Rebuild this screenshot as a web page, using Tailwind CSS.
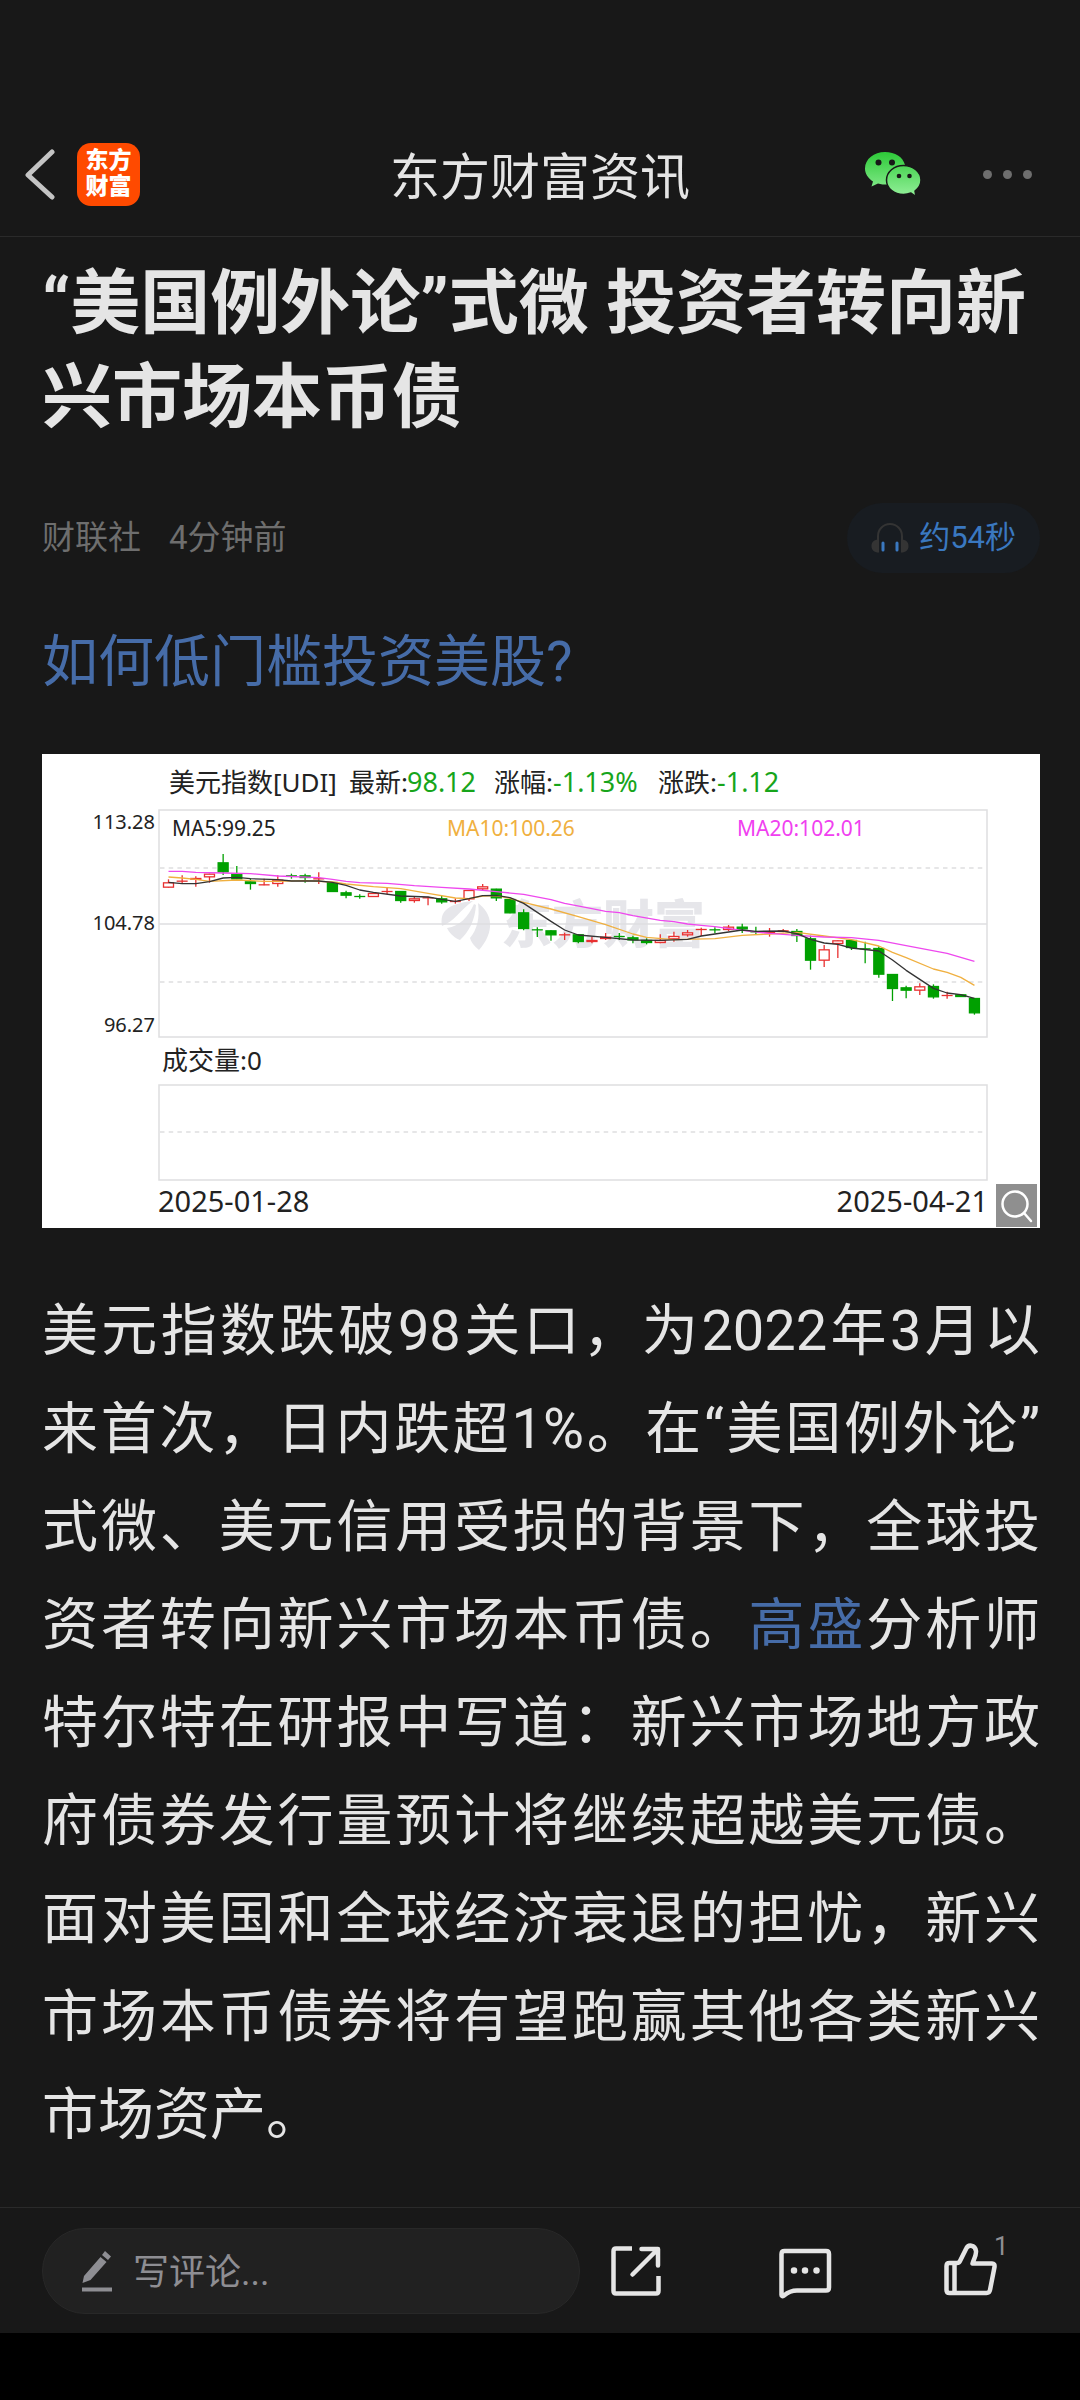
<!DOCTYPE html>
<html lang="zh-CN">
<head>
  <meta charset="UTF-8" />
  <meta name="viewport" content="width=device-width, initial-scale=1" />
  <title>东方财富资讯</title>
  <script src="https://cdn.jsdelivr.net/npm/@tailwindcss/browser@4"></script>
</head>
<body class="bg-black font-['Roboto','Noto_Sans_CJK_SC',sans-serif] text-[#e5e5e5]">
  <div class="flex min-h-screen flex-col bg-[#181818]">
    <!-- Header -->
    <header class="grid grid-cols-[1fr_auto_1fr] items-center border-b border-[#2a2a2a] pt-28">
      <div class="flex h-31 items-center gap-[21px] pl-6">
        <button type="button" aria-label="返回">
          <svg class="h-[52px] w-[32px]" viewBox="0 0 32 52" fill="none" stroke="#c4c4c4" stroke-width="5" stroke-linecap="round" stroke-linejoin="round">
            <path d="M28 4L4 27L28 49" />
          </svg>
        </button>
        <a href="#" class="flex size-[63px] flex-col items-center justify-center rounded-[14px] bg-[#ff4a00] text-[23px] leading-[26px] font-black text-white">
          <span>东方</span>
          <span>财富</span>
        </a>
      </div>
      <h2 class="pt-2 text-[50px] leading-[60px]">东方财富资讯</h2>
      <div class="flex items-center justify-end gap-[62px] pr-12">
        <button type="button" aria-label="微信分享">
          <svg class="h-[46px] w-[56px]" viewBox="0 0 56 46">
            <defs>
              <linearGradient id="wx" x1="0" y1="0" x2="0" y2="46" gradientUnits="userSpaceOnUse">
                <stop offset="0" stop-color="#2bc936" />
                <stop offset="1" stop-color="#95f09b" />
              </linearGradient>
            </defs>
            <path fill="url(#wx)" d="M20 1C9 1 0 8 0 17.500C0 23 3 27 8 30.500L6.500 35.500L13 32.500C16 33.500 19 33.500 22 33.500L40 14C38 6 30 1 20 1Z" />
            <path fill="url(#wx)" stroke="#181818" stroke-width="1.500" d="M38.500 14.500C29 14.500 21.500 21 21.500 29C21.500 37.500 29 43.500 38.500 43.500C41 43.500 43.500 43 46 42L51 45.500L50 40C54 37 56 33.500 56 29C56 21 48 14.500 38.500 14.500Z" />
            <g fill="#181818">
              <circle cx="13.500" cy="11.500" r="3" />
              <circle cx="27" cy="11.500" r="3" />
              <circle cx="34" cy="25" r="2.300" />
              <circle cx="44.500" cy="25" r="2.300" />
            </g>
          </svg>
        </button>
        <button type="button" aria-label="更多" class="flex gap-[11px]">
          <span class="size-[9px] rounded-full bg-[#6e6e6e]"></span>
          <span class="size-[9px] rounded-full bg-[#6e6e6e]"></span>
          <span class="size-[9px] rounded-full bg-[#6e6e6e]"></span>
        </button>
      </div>
    </header>

    <!-- Article -->
    <main class="flex-1 pt-5 pr-10 pb-10 pl-[42px]">
      <h1 class="text-[70px] leading-[94px] font-bold">“美国例外论”式微 投资者转向新兴市场本币债</h1>

      <div class="mt-[58px] flex items-center justify-between">
        <p class="flex gap-7 text-[33px] leading-[40px] text-[#6e6e6e]"><span>财联社</span><span>4分钟前</span></p>
        <button type="button" class="flex h-[70px] items-center gap-[10px] rounded-full bg-[#181c21] px-6 text-[31px] text-[#3a78c0]">
          <svg class="h-[30px] w-[38px]" viewBox="0 0 38 30">
            <path d="M7 18V13A12 12 0 0 1 31 13V18" fill="none" stroke="#343434" stroke-width="2" />
            <path d="M8 16.500C3 16.500 0.500 19 0.500 23S3 29.500 8 29.500ZM30 16.500C35 16.500 37.500 19 37.500 23S35 29.500 30 29.500Z" fill="#343434" />
            <path d="M12 20V27M26 20V27" stroke="#3a78c0" stroke-width="3" stroke-linecap="round" />
          </svg>
          <span>约54秒</span>
        </button>
      </div>

      <p class="mt-[49px] text-[56px] leading-[80px]"><a href="#" class="text-[#466ca8]">如何低门槛投资美股?</a></p>

      <!-- Dollar index K-line -->
      <figure class="mt-[52px] bg-white">
        <svg id="kline" class="block w-full font-['Noto_Sans','Noto_Sans_CJK_SC',sans-serif]" viewBox="0 0 998 474" role="img" aria-label="美元指数走势图">
          <g fill="#e6e6ea">
            <path d="M400 172C398 158 404 150 431 147C419 155 412 168 400 172Z" />
            <path d="M432 150C426 163 418 172 405 174C408 180 413 184 418 186C427 178 433 166 434 151Z" />
            <path d="M436 149C451 160 453 178 437 196C432 192 429 188 428 184C435 176 438 164 436 149Z" />
            <text x="459" y="189" font-size="51" font-weight="900">东方财富</text>
          </g>
          <g fill="none" stroke="#dedee0" stroke-width="1.500">
            <path d="M117 170H945" />
            <path d="M118 114H941M118 228H941M118 378H941" stroke-dasharray="4.500 4.200" />
            <rect x="117" y="56" width="828" height="227" />
            <rect x="117" y="331" width="828" height="95" />
          </g>
          <g fill="#222" font-size="26">
            <text x="127" y="38">美元指数[UDI]</text>
            <text x="307" y="38">最新:</text>
            <text x="452" y="38">涨幅:</text>
            <text x="616" y="38">涨跌:</text>
            <text x="120" y="316">成交量:0</text>
            <text x="116" y="458" font-size="29">2025-01-28</text>
            <text x="946" y="458" font-size="29" text-anchor="end">2025-04-21</text>
          </g>
          <g fill="#17a51b" font-size="27">
            <text x="365" y="38">98.12</text>
            <text x="511" y="38">-1.13%</text>
            <text x="675" y="38">-1.12</text>
          </g>
          <g fill="#222" font-size="20" text-anchor="end">
            <text x="113" y="75">113.28</text>
            <text x="113" y="176">104.78</text>
            <text x="113" y="278">96.27</text>
          </g>
          <g font-size="21">
            <text x="130" y="82" fill="#222">MA5:99.25</text>
            <text x="405" y="82" fill="#f0b040">MA10:100.26</text>
            <text x="695" y="82" fill="#f040f0">MA20:102.01</text>
          </g>
          <g id="candles" stroke-width="1.300"></g>
          <g id="averages" fill="none" stroke-width="1.300" stroke-linejoin="round"></g>
          <rect x="954" y="430" width="41" height="43" fill="#8f8f8f" />
          <g fill="none" stroke="#fff" stroke-width="2.500" stroke-linecap="round">
            <circle cx="973" cy="450" r="12.500" />
            <path d="M982 459L989 467" />
          </g>
        </svg>
      </figure>

      <p class="mt-[54px] text-justify text-[56px] leading-[98px]">美元指数跌破98关口，为2022年3月以来首次，日内跌超1%。在“美国例外论”式微、美元信用受损的背景下，全球投资者转向新兴市场本币债。<a href="#" class="text-[#466ca8]">高盛</a>分析师特尔特在研报中写道：新兴市场地方政府债券发行量预计将继续超越美元债。面对美国和全球经济衰退的担忧，新兴市场本币债券将有望跑赢其他各类新兴市场资产。</p>
    </main>

    <!-- Comment bar -->
    <footer class="border-t border-[#2a2a2a]">
      <div class="flex h-[125px] items-center pr-[82px] pl-[42px]">
        <label class="flex h-[86px] w-[538px] shrink-0 items-center gap-5 rounded-full border border-[#282828] bg-[#212121] px-[38px]">
          <svg class="h-[42px] w-[32px] shrink-0" viewBox="0 0 32 42" fill="#8e8e93">
            <path d="M19.500 7L25.500 12L9.500 30L1.500 33L3 26ZM24 1L30 6.500L27 10L21 5Z" />
            <rect x="1" y="37.500" width="30" height="4" />
          </svg>
          <input type="text" placeholder="写评论..." class="min-w-0 flex-1 bg-transparent pt-1 text-[36px] leading-[48px] outline-none placeholder:text-[#8e8e93]" />
        </label>
        <div class="flex flex-1 items-center justify-between pl-7">
          <button type="button" aria-label="分享">
            <svg class="size-[56px]" viewBox="0 0 56 56" fill="none" stroke="#e5e5e5" stroke-width="4.500" stroke-linejoin="round">
              <path d="M24 5.500H8Q5.500 5.500 5.500 8V48Q5.500 50.500 8 50.500H48Q50.500 50.500 50.500 48V33" />
              <path d="M33.500 6H50V22.500M49 7L24.500 31.500" stroke-linecap="round" />
            </svg>
          </button>
          <button type="button" aria-label="评论" class="pl-1">
            <svg class="size-[56px]" viewBox="0 0 56 56" fill="none" stroke="#e5e5e5" stroke-width="4.500" stroke-linejoin="round">
              <path d="M4.500 52V11Q4.500 8 7.500 8H49Q52 8 52 11V44.500Q52 47.500 49 47.500H20C14 47.500 10 50 7 52.500Q4.500 54 4.500 52Z" />
              <path d="M17 27.500h.01M28 27.500h.01M39.500 27.500h.01" stroke-width="6.500" stroke-linecap="round" />
            </svg>
          </button>
          <button type="button" class="relative" aria-label="点赞">
            <svg class="size-[56px]" viewBox="0 0 56 56" fill="none" stroke="#e5e5e5" stroke-width="4.500" stroke-linejoin="round">
              <path d="M4.500 23Q4.500 20 7.500 20H15Q17 20 18 18L24 6C26 1 33 1.500 34 8C34.500 12 31.500 17 30.500 20.500H50Q53 20.500 52.500 24L48 47Q47.500 50 44.500 50H7.500Q4.500 50 4.500 47Z" />
              <path d="M12.500 21V49" />
            </svg>
            <span class="absolute -top-3 left-[52px] text-[26px] leading-[30px] text-[#8e8e93]">1</span>
          </button>
        </div>
      </div>
    </footer>
    <div class="h-[67px] bg-black"></div>
  </div>

  <script>
    const RED = '#e83030', GREEN = '#00a000';
    // [color, high, low, body top, body bottom], in thirds of a chart unit
    const candles = [
      ['r',388,413,397,413],['r',376,400,392,395],['r',379,410,384,389],['r',371,398,371,382],['g',312,375,337,367],
      ['g',348,388,371,388],['g',386,419,394,402],['r',386,406,403,406],['r',376,410,389,402],['g',371,386,376,380],
      ['g',371,398,376,384],['r',367,402,385,388],['g',396,426,396,426],['g',422,445,427,437],['g',433,446,438,442],
      ['r',428,440,429,441],['r',414,433,423,426],['g',423,458,423,453],['r',440,458,445,453],['r',440,466,442,445],
      ['g',437,461,445,457],['r',445,461,453,457],['r',420,453,420,448],['r',402,420,409,418],['g',416,453,416,445],
      ['g',447,490,447,490],['g',478,541,487,537],['g',532,561,538,541],['g',541,572,541,556],['r',548,570,553,556],
      ['g',553,580,553,576],['r',560,580,570,576],['r',549,570,560,567],['g',549,570,558,561],['g',557,580,562,571],
      ['g',565,583,570,579],['r',553,580,570,579],['r',545,575,558,568],['r',540,560,547,556],['r',533,558,537,540],
      ['g',532,550,538,541],['r',525,543,530,540],['g',521,549,530,538],['g',530,553,544,547],['r',534,560,544,549],
      ['r',537,547,541,545],['g',537,576,543,558],['g',557,659,565,632],['r',585,651,598,632],['r',571,624,571,582],
      ['g',570,600,570,594],['g',575,640,595,598],['g',589,683,594,674],['g',672,753,672,717],['g',707,745,712,722],
      ['r',700,735,709,722],['g',703,746,708,742],['r',725,746,735,738],['g',733,741,733,741],['g',744,794,744,790]
    ];
    // [candle index, value] pairs for each moving average
    const averages = {
      '#f0b040': [[0,381],[1,384],[2,388],[3,394],[5,390],[7,394],[8,394],[10,392],[12,396],[13,402],[15,410],[17,416],[19,430],[21,444],[22,446],[23,438],[24,437],[25,445],[26,457],[28,477],[30,500],[32,524],[34,552],[35,562],[37,569],[40,566],[42,556],[44,552],[46,547],[48,558],[50,569],[52,588],[53,607],[54,623],[56,657],[57,667],[58,682],[59,706]],
      '#ee48ee': [[0,364],[1,364],[2,367],[4,369],[6,371],[8,378],[11,383],[12,388],[13,394],[14,398],[16,400],[18,407],[20,412],[22,417],[24,425],[26,433],[28,449],[29,460],[31,476],[32,484],[33,488],[34,497],[36,511],[37,515],[38,522],[39,526],[40,530],[42,541],[44,550],[46,556],[48,561],[50,563],[52,571],[54,587],[57,610],[59,634]],
      '#333333': [[0,397],[1,401],[2,401],[3,395],[4,384],[5,382],[6,386],[8,389],[9,393],[11,393],[12,397],[13,406],[14,420],[15,427],[17,438],[19,441],[20,448],[21,454],[22,446],[23,437],[24,436],[25,443],[26,460],[28,514],[29,540],[30,555],[32,562],[34,570],[36,571],[38,568],[39,558],[40,552],[42,540],[43,544],[45,543],[46,551],[47,568],[48,579],[49,583],[50,594],[52,603],[53,630],[54,661],[56,715],[57,729],[58,734],[59,745]]
    };
    const px = i => 126.5 + i * 13.66;
    const py = v => v / 3 - 4;

    document.getElementById('candles').innerHTML = candles.map(([c, high, low, top, bottom], i) => {
      const color = c === 'r' ? RED : GREEN;
      const fill = c === 'r' ? 'white' : GREEN;
      const height = Math.max(py(bottom) - py(top), 1);
      const body = height < 1.5
        ? `<path d="M${px(i) - 5.5} ${py(top) + 0.5}h11" stroke="${color}"/>`
        : `<rect x="${px(i) - 5}" y="${py(top) + 0.5}" width="10" height="${Math.max(height - 1, 0.6)}" fill="${fill}" stroke="${color}"/>`;
      return `<path d="M${px(i)} ${py(high)}V${py(low)}" stroke="${color}"/>${body}`;
    }).join('');

    document.getElementById('averages').innerHTML = Object.entries(averages).map(([color, points]) =>
      `<polyline stroke="${color}" points="${points.map(([i, v]) => px(i) + ',' + py(v)).join(' ')}"/>`
    ).join('');
  </script>
</body>
</html>
